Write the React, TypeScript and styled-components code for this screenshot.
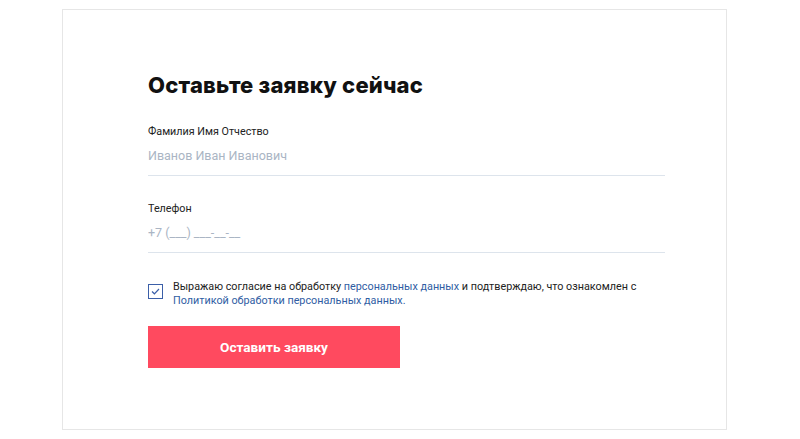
import React, { FC } from 'react';
import styled, { createGlobalStyle } from 'styled-components';

const GlobalStyle = createGlobalStyle`
  body {
    margin: 0;
    background: #ffffff;
    font-family: Roboto, 'Liberation Sans', sans-serif;
  }
`;

const Page = styled.div`
  padding: 9px 0 0 62px;
`;

const Card = styled.section`
  box-sizing: border-box;
  width: 665px;
  height: 421px;
  border: 1px solid #e6e6e6;
  padding: 60px 61px 0 85px;
`;

const Heading = styled.h2`
  margin: 0 0 25px;
  font-family: Inter, 'Noto Sans', sans-serif;
  font-weight: 800;
  font-size: 22px;
  line-height: 30px;
  color: #111111;
  letter-spacing: 0.2px;
`;

const Field = styled.label`
  display: flex;
  flex-direction: column;
  border-bottom: 1px solid #dde4ec;
  padding-bottom: 11px;
  margin-bottom: 26px;
`;

const FieldLabel = styled.span`
  font-size: 10.75px;
  line-height: 14px;
  color: #222222;
  margin-bottom: 8px;
`;

const Input = styled.input`
  border: 0;
  padding: 0;
  outline: none;
  font-family: Roboto, 'Liberation Sans', sans-serif;
  font-size: 12.5px;
  line-height: 17px;
  color: #222222;
  background: transparent;

  &::placeholder {
    color: #aab5c4;
  }
`;

const Consent = styled.div`
  display: flex;
  align-items: flex-start;
  gap: 10px;
  margin-top: 27px;
`;

const Box = styled.span`
  flex: 0 0 auto;
  box-sizing: border-box;
  width: 15px;
  height: 15px;
  margin-top: 4px;
  border: 1px solid #3b5fa8;
  display: flex;
  align-items: center;
  justify-content: center;
`;

const ConsentText = styled.p`
  margin: 0;
  font-size: 10.8px;
  line-height: 14px;
  color: #222222;
`;

const Link = styled.a`
  color: #2f5da3;
  text-decoration: none;
`;

const Submit = styled.button`
  display: block;
  width: 252px;
  height: 42px;
  margin-top: 18px;
  border: 0;
  background: #ff4a5f;
  color: #ffffff;
  font-family: Roboto, 'Liberation Sans', sans-serif;
  font-weight: 700;
  font-size: 13.6px;
  cursor: pointer;
`;

const App: FC = () => (
  <Page>
    <GlobalStyle />
    <Card>
      <Heading>Оставьте заявку сейчас</Heading>

      <Field>
        <FieldLabel>Фамилия Имя Отчество</FieldLabel>
        <Input placeholder="Иванов Иван Иванович" />
      </Field>

      <Field>
        <FieldLabel>Телефон</FieldLabel>
        <Input placeholder="+7 (___) ___-__-__" />
      </Field>

      <Consent>
        <Box>
          <svg width="9" height="7" viewBox="0 0 9 7" fill="none">
            <path d="M1 3.5L3.4 5.8L8 1" stroke="#3b5fa8" strokeWidth="1.2" />
          </svg>
        </Box>
        <ConsentText>
          Выражаю согласие на обработку <Link href="#">персональных данных</Link> и подтверждаю, что ознакомлен с
          <br />
          <Link href="#">Политикой обработки персональных данных.</Link>
        </ConsentText>
      </Consent>

      <Submit type="button">Оставить заявку</Submit>
    </Card>
  </Page>
);

export default App;
